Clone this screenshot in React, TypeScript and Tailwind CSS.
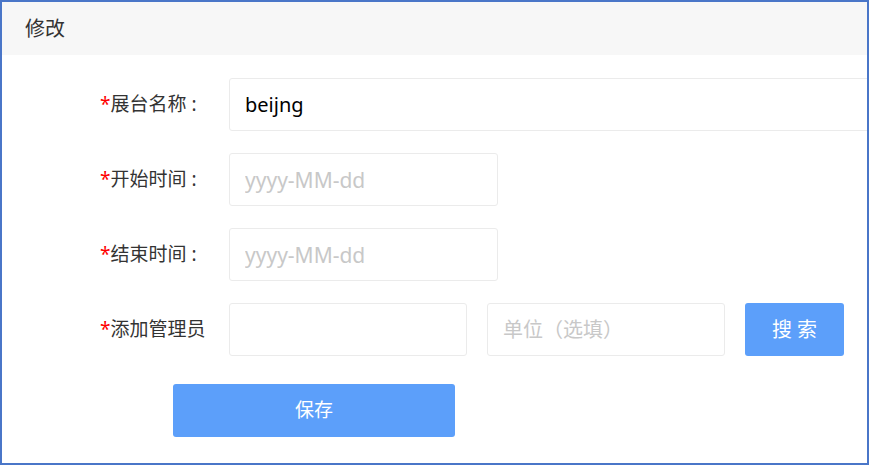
import React from "react";

const font = { fontFamily: '"Noto Sans", "Noto Sans CJK SC", sans-serif' };

function Label({ text, colon = true }: { text: string; colon?: boolean }) {
  return (
    <div className="w-[129px] shrink-0 whitespace-nowrap text-[19px] text-[#333]">
      <span className="text-[#ff0000]">*</span>
      {text}
      {colon && <span className="ml-[5px]">:</span>}
    </div>
  );
}

const inputCls =
  "h-[53px] border border-[#ebebeb] rounded-[3px] px-[15px] outline-none placeholder:text-[#c8c8c8]";

export default function App() {
  return (
    <div
      className="w-[869px] h-[465px] border-2 border-[#4a76c8] bg-white overflow-hidden"
      style={font}
    >
      {/* Header */}
      <div className="h-[53px] bg-[#f7f7f7] flex items-center pl-[23px] text-[20px] text-[#333]">
        修改
      </div>

      {/* Form */}
      <div className="pt-[23px] pl-[98px] flex flex-col gap-[22px]">
        <div className="flex items-center">
          <Label text="展台名称" />
          <input
            defaultValue="beijng"
            className={`${inputCls} w-[660px] shrink-0 text-[20px] text-black`}
          />
        </div>

        <div className="flex items-center">
          <Label text="开始时间" />
          <input placeholder="yyyy-MM-dd" className={`${inputCls} w-[269px] text-[21px]`} />
        </div>

        <div className="flex items-center">
          <Label text="结束时间" />
          <input placeholder="yyyy-MM-dd" className={`${inputCls} w-[269px] text-[21px]`} />
        </div>

        <div className="flex items-center">
          <Label text="添加管理员" colon={false} />
          <input className={`${inputCls} w-[238px] text-[19px]`} />
          <input
            placeholder="单位（选填）"
            className={`${inputCls} ml-[20px] w-[238px] text-[20px]`}
          />
          <button className="ml-[20px] w-[99px] h-[53px] rounded-[3px] bg-[#5c9ffa] text-white text-[20px] tracking-[5px] pl-[5px]">
            搜索
          </button>
        </div>

        <div className="pl-[73px] pt-[6px]">
          <button className="w-[282px] h-[53px] rounded-[3px] bg-[#5c9ffa] text-white text-[19px]">
            保存
          </button>
        </div>
      </div>
    </div>
  );
}
